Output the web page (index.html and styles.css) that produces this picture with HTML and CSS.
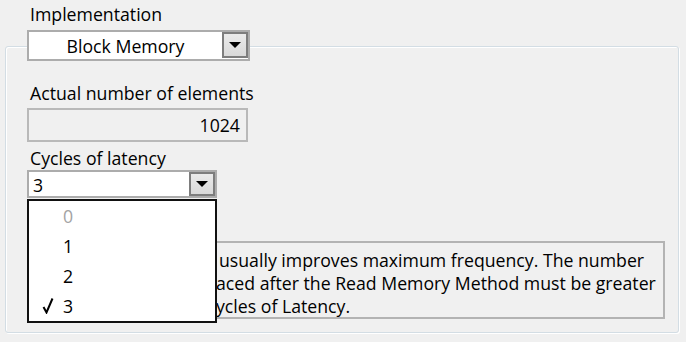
FILE: index.html
```html
<!DOCTYPE html>
<html>
  <head>
    <link rel="stylesheet" href="styles.css">
  </head>
  <body>
    <div class="panel">
      <div class="label impl-label">Implementation</div>
      <div class="combo combo-impl">
        <span class="combo-value">Block Memory</span>
        <span class="combo-btn"><span class="arrow"></span></span>
      </div>

      <div class="group">
        <div class="label first">Actual number of elements</div>
        <div class="readout">1024</div>

        <div class="label latency-label">Cycles of latency</div>
        <div class="latency">
          <div class="combo combo-latency">
            <span class="combo-value">3</span>
            <span class="combo-btn"><span class="arrow"></span></span>
          </div>
          <ul class="menu">
            <li class="disabled">0</li>
            <li>1</li>
            <li>2</li>
            <li class="checked">
              <svg class="tick" width="12" height="17" viewBox="0 0 12 17">
                <path d="M1.5 10 L4.5 15.5 L10.5 1.5" fill="none" stroke="#000" stroke-width="2"/>
              </svg>
              3
            </li>
          </ul>
        </div>

        <!-- left part of the help text sits under the open list -->
        <div class="desc">
          <div class="desc-line first-line">usually improves maximum frequency. The number</div>
          <div class="desc-line">aced after the Read Memory Method must be greater</div>
          <div class="desc-line">ycles of Latency.</div>
        </div>
      </div>
    </div>
  </body>
</html>
```

FILE: styles.css
```css
body {
  margin: 0;
  background-color: #f0f0f0;
  font-family: "Open Sans", "Liberation Sans", sans-serif;
  font-size: 17.7px;
  color: #000;
}

.panel {
  padding-left: 27px;
  width: 659px;
  height: 342px;
  overflow: hidden;
}

.label {
  line-height: 22px;
  padding-left: 3px;
  white-space: nowrap;
}

.impl-label {
  padding-top: 3px;
  height: 27px;
}

.combo {
  position: relative;
  z-index: 1;
  box-sizing: border-box;
  display: flex;
  background-color: #fff;
  border: 2px solid #acacac;
}

.combo-value {
  flex: 1;
  white-space: nowrap;
}

.combo-btn {
  box-sizing: border-box;
  width: 26px;
  display: flex;
  justify-content: center;
  align-items: center;
  background: linear-gradient(#eaeaea, #d9d9d9);
  border: 2px solid #7d7d7d;
}

.arrow {
  width: 0;
  height: 0;
  border-left: 6px solid transparent;
  border-right: 6px solid transparent;
  border-top: 6px solid #000;
}

.combo-impl {
  width: 223px;
  height: 31px;
}

.combo-impl .combo-value {
  text-align: center;
  line-height: 27px;
  padding-top: 1px;
}

.combo-impl .combo-btn {
  height: 26px;
}

.group {
  position: relative;
  box-sizing: border-box;
  margin-top: -15px;
  margin-left: -22px;
  width: 674px;
  height: 287px;
  padding: 35px 0 0 21px;
  border: 1px solid #d3dde4;
  border-radius: 3px;
  box-shadow: inset 1px 1px 0 #fff, 1px 1px 0 #fff;
}

.readout {
  box-sizing: border-box;
  margin-top: 4px;
  width: 221px;
  height: 34px;
  padding-right: 6px;
  line-height: 30px;
  text-align: right;
  border: 2px solid #b9b9b9;
}

.latency-label {
  margin-top: 5px;
}

.latency {
  position: relative;
  margin-top: 1px;
  width: 190px;
  height: 28px;
}

.combo-latency {
  width: 190px;
  height: 28px;
}

.combo-latency .combo-value {
  padding: 3px 0 0 4px;
  line-height: 21px;
}

.combo-latency .combo-btn {
  height: 24px;
}

.menu {
  position: absolute;
  z-index: 2;
  top: 29px;
  left: 0;
  box-sizing: border-box;
  width: 190px;
  height: 124px;
  margin: 0;
  padding: 0;
  list-style: none;
  background-color: #fff;
  border: 2px solid #111;
}

.menu li {
  position: relative;
  height: 30px;
  line-height: 30px;
  padding-left: 34px;
}

.menu li.disabled {
  color: #a3a3a3;
}

.tick {
  position: absolute;
  left: 13px;
  top: 6px;
}

.desc {
  box-sizing: border-box;
  margin-top: 43px;
  width: 638px;
  height: 78px;
  padding: 6px 0 0 187px;
  border: 2px solid #b3b3b3;
}

.desc-line {
  line-height: 23px;
  white-space: nowrap;
}

.first-line {
  padding-left: 3px;
}
```
